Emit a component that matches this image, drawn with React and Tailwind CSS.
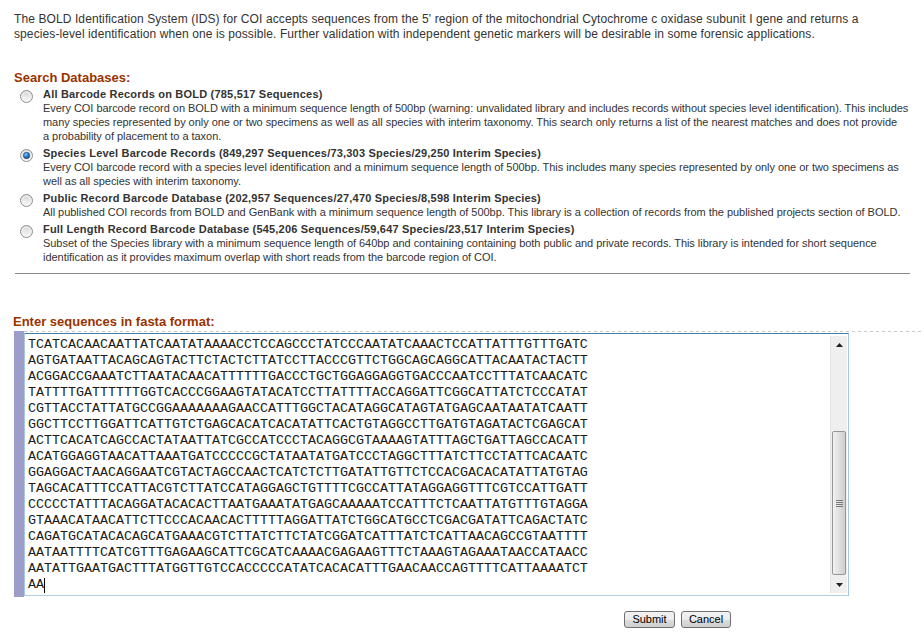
import React from "react";

const SEQ = [
  "TCATCACAACAATTATCAATATAAAACCTCCAGCCCTATCCCAATATCAAACTCCATTATTTGTTTGATC",
  "AGTGATAATTACAGCAGTACTTCTACTCTTATCCTTACCCGTTCTGGCAGCAGGCATTACAATACTACTT",
  "ACGGACCGAAATCTTAATACAACATTTTTTGACCCTGCTGGAGGAGGTGACCCAATCCTTTATCAACATC",
  "TATTTTGATTTTTTGGTCACCCGGAAGTATACATCCTTATTTTACCAGGATTCGGCATTATCTCCCATAT",
  "CGTTACCTATTATGCCGGAAAAAAAGAACCATTTGGCTACATAGGCATAGTATGAGCAATAATATCAATT",
  "GGCTTCCTTGGATTCATTGTCTGAGCACATCACATATTCACTGTAGGCCTTGATGTAGATACTCGAGCAT",
  "ACTTCACATCAGCCACTATAATTATCGCCATCCCTACAGGCGTAAAAGTATTTAGCTGATTAGCCACATT",
  "ACATGGAGGTAACATTAAATGATCCCCCGCTATAATATGATCCCTAGGCTTTATCTTCCTATTCACAATC",
  "GGAGGACTAACAGGAATCGTACTAGCCAACTCATCTCTTGATATTGTTCTCCACGACACATATTATGTAG",
  "TAGCACATTTCCATTACGTCTTATCCATAGGAGCTGTTTTCGCCATTATAGGAGGTTTCGTCCATTGATT",
  "CCCCCTATTTACAGGATACACACTTAATGAAATATGAGCAAAAATCCATTTCTCAATTATGTTTGTAGGA",
  "GTAAACATAACATTCTTCCCACAACACTTTTTAGGATTATCTGGCATGCCTCGACGATATTCAGACTATC",
  "CAGATGCATACACAGCATGAAACGTCTTATCTTCTATCGGATCATTTATCTCATTAACAGCCGTAATTTT",
  "AATAATTTTCATCGTTTGAGAAGCATTCGCATCAAAACGAGAAGTTTCTAAAGTAGAAATAACCATAACC",
  "AATATTGAATGACTTTATGGTTGTCCACCCCCATATCACACATTTGAACAACCAGTTTTCATTAAAATCT",
];

const OPTIONS = [
  {
    title: "All Barcode Records on BOLD (785,517 Sequences)",
    lines: [
      "Every COI barcode record on BOLD with a minimum sequence length of 500bp (warning: unvalidated library and includes records without species level identification). This includes",
      "many species represented by only one or two specimens as well as all species with interim taxonomy. This search only returns a list of the nearest matches and does not provide",
      "a probability of placement to a taxon.",
    ],
    checked: false,
  },
  {
    title:
      "Species Level Barcode Records (849,297 Sequences/73,303 Species/29,250 Interim Species)",
    lines: [
      "Every COI barcode record with a species level identification and a minimum sequence length of 500bp. This includes many species represented by only one or two specimens as",
      "well as all species with interim taxonomy.",
    ],
    checked: true,
  },
  {
    title:
      "Public Record Barcode Database (202,957 Sequences/27,470 Species/8,598 Interim Species)",
    lines: [
      "All published COI records from BOLD and GenBank with a minimum sequence length of 500bp. This library is a collection of records from the published projects section of BOLD.",
    ],
    checked: false,
  },
  {
    title:
      "Full Length Record Barcode Database (545,206 Sequences/59,647 Species/23,517 Interim Species)",
    lines: [
      "Subset of the Species library with a minimum sequence length of 640bp and containing containing both public and private records. This library is intended for short sequence",
      "identification as it provides maximum overlap with short reads from the barcode region of COI.",
    ],
    checked: false,
  },
];

function Radio({ checked, id }) {
  return (
    <svg width="13" height="13" viewBox="0 0 13 13" className="shrink-0">
      <defs>
        <linearGradient id={`rg${id}`} x1="0" y1="0" x2="0" y2="1">
          <stop offset="0" stopColor="#d6d6d6" />
          <stop offset="1" stopColor="#fbfbfb" />
        </linearGradient>
        <radialGradient id={`rb${id}`} cx="0.4" cy="0.35" r="0.7">
          <stop offset="0" stopColor="#8fd0ff" />
          <stop offset="0.5" stopColor="#2b7ac4" />
          <stop offset="1" stopColor="#0e3f7a" />
        </radialGradient>
      </defs>
      <circle cx="6.5" cy="6.5" r="6" fill={`url(#rg${id})`} stroke="#8e8f8f" strokeWidth="1" />
      <circle cx="6.5" cy="6.5" r="4.5" fill="none" stroke="#f3f3f3" strokeWidth="0.8" />
      {checked && <circle cx="6.5" cy="6.5" r="3.2" fill={`url(#rb${id})`} stroke="#1a4f88" strokeWidth="0.6" />}
    </svg>
  );
}

function Scrollbar() {
  return (
    <div className="w-[17px] my-[2px] mr-[1px] flex flex-col bg-[#efefef] border-l border-[#e2e2e2]">
      <div className="h-[17px] flex items-center justify-center">
        <svg width="7" height="4" viewBox="0 0 7 4">
          <path d="M3.5 0 L7 4 L0 4 Z" fill="#202020" />
        </svg>
      </div>
      <div className="h-[78px]" />
      <div className="h-[144px] mx-px rounded-[2px] border border-[#979797] bg-[linear-gradient(to_right,#f1f1f1,#dcdcdc_60%,#cfcfcf)] flex items-center justify-center">
        <div className="flex flex-col gap-[1px]">
          <div className="w-[7px] h-px bg-[#7a7a7a]" />
          <div className="w-[7px] h-px bg-[#7a7a7a]" />
          <div className="w-[7px] h-px bg-[#7a7a7a]" />
          <div className="w-[7px] h-px bg-[#7a7a7a]" />
        </div>
      </div>
      <div className="flex-1" />
      <div className="h-[17px] flex items-center justify-center">
        <svg width="7" height="4" viewBox="0 0 7 4">
          <path d="M0 0 L7 0 L3.5 4 Z" fill="#202020" />
        </svg>
      </div>
    </div>
  );
}

export default function App() {
  return (
    <div className="w-[924px] h-[635px] bg-white overflow-hidden font-['Liberation_Sans',Arial,sans-serif] text-[#333333]">
      <p className="pt-[12px] pl-[14px] text-[12px] leading-[15px] tracking-[0.1px] whitespace-nowrap">
        The BOLD Identification System (IDS) for COI accepts sequences from the 5' region of the mitochondrial Cytochrome c oxidase subunit I gene and returns a
        <br />
        species-level identification when one is possible. Further validation with independent genetic markers will be desirable in some forensic applications.
      </p>

      <h2 className="mt-[28px] pl-[14px] text-[13px] leading-[16px] font-bold text-[#993300]">
        Search Databases:
      </h2>

      <div className="mt-px flex flex-col gap-[3px]">
        {OPTIONS.map((o, i) => (
          <div key={i} className="flex">
            <div className="pl-[20px] pt-[3px] w-[43px]">
              <Radio checked={o.checked} id={i} />
            </div>
            <div className="text-[11px] leading-[14px] whitespace-nowrap">
              <div className="font-bold tracking-[0.2px]">{o.title}</div>
              {o.lines.map((l, j) => (
                <div key={j} className="tracking-[-0.04px]">{l}</div>
              ))}
            </div>
          </div>
        ))}
      </div>

      <div className="mt-[9px] ml-[15px] w-[895px] h-px bg-[#8a8a8a]" />

      <h2 className="mt-[40px] pl-[13px] text-[13px] leading-[16px] font-bold text-[#993300]">
        Enter sequences in fasta format:
      </h2>

      <div className="mt-px ml-[14px] flex">
        <div className="w-[10px] h-[266px] bg-[#9d9dcc]" />
        <div className="flex-1 flex flex-col">
          <div className="h-px bg-[repeating-linear-gradient(to_right,#c9c9c9_0_3px,transparent_3px_6px)]" />
          <div className="mt-px w-[825px] h-[263px] border-t border-t-[#497ba9] border-l border-r border-b border-l-[#a9c8e0] border-r-[#a3c8e6] border-b-[#b3cfe4] flex bg-white">
            <div className="flex-1 pl-[3px] pt-[3px] font-['Liberation_Mono','Courier_New',monospace] text-[13.33px] leading-[16px] text-[#1a1a1a] whitespace-pre">
              {SEQ.map((s, i) => (
                <div key={i}>{s}</div>
              ))}
              <div className="flex items-center">
                AA<span className="inline-block w-px h-[15px] bg-black" />
              </div>
            </div>
            <Scrollbar />
          </div>
        </div>
      </div>

      <div className="mt-[14px] pl-[624px] flex gap-[6px]">
        <button className="w-[51px] h-[17px] rounded-[3px] border border-[#707070] bg-[linear-gradient(to_bottom,#f2f2f2,#ebebeb_50%,#dddddd_51%,#cfcfcf)] text-[11px] leading-[15px] text-black font-['Liberation_Sans',Arial,sans-serif]">
          Submit
        </button>
        <button className="w-[50px] h-[17px] rounded-[3px] border border-[#707070] bg-[linear-gradient(to_bottom,#f2f2f2,#ebebeb_50%,#dddddd_51%,#cfcfcf)] text-[11px] leading-[15px] text-black font-['Liberation_Sans',Arial,sans-serif]">
          Cancel
        </button>
      </div>
    </div>
  );
}
